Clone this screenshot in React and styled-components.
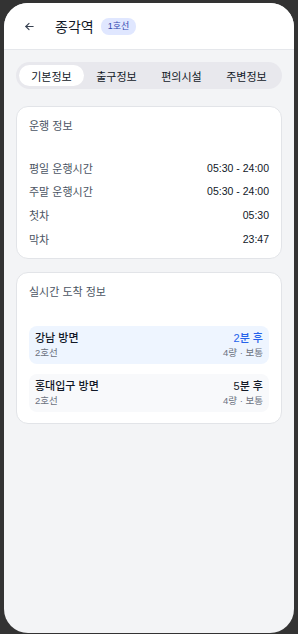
import React from "react";
import styled, { createGlobalStyle } from "styled-components";

const Global = createGlobalStyle`
  html, body { margin: 0; padding: 0; background: #333333; }
  body { font-family: "Liberation Sans", "Noto Sans CJK KR", sans-serif; }
  * { box-sizing: border-box; }
`;

const Phone = styled.div`
  width: 290px;
  height: 630px;
  margin: 3px 0 0 4px;
  border-radius: 24px;
  overflow: hidden;
  background: #f3f4f6;
  display: flex;
  flex-direction: column;
`;

const Header = styled.header`
  height: 47px;
  background: #ffffff;
  border-bottom: 1px solid #e5e7eb;
  display: flex;
  align-items: center;
  padding: 0 0 0 18px;
`;

const BackButton = styled.button`
  border: 0;
  background: none;
  padding: 0;
  width: 14px;
  height: 14px;
  display: flex;
  align-items: center;
  justify-content: center;
  color: #374151;
  margin-right: 19px;
`;

const Title = styled.h1`
  margin: 0;
  font-size: 14px;
  font-weight: 400;
  color: #111827;
`;

const LineBadge = styled.span`
  margin-left: 7px;
  font-size: 9px;
  line-height: 1;
  color: #3348b0;
  background: #e0e7ff;
  border-radius: 8px;
  padding: 4px 7px;
`;

const Content = styled.main`
  padding: 12px 12px;
  display: flex;
  flex-direction: column;
  gap: 13px;
`;

const Tabs = styled.div`
  display: grid;
  grid-template-columns: repeat(4, 1fr);
  background: #e8e8ed;
  border-radius: 14px;
  padding: 3px;
  margin-bottom: 4px;
`;

const Tab = styled.button`
  border: 0;
  font-family: inherit;
  font-size: 11px;
  height: 21px;
  border-radius: 11px;
  color: #111827;
  background: ${(p) => (p.$active ? "#ffffff" : "transparent")};
  padding: 0;
`;

const Card = styled.section`
  background: #ffffff;
  border: 1px solid #e2e4e8;
  border-radius: 12px;
  padding: 11px 12px ${(p) => p.$pb}px;
`;

const CardTitle = styled.h2`
  margin: 0 0 ${(p) => p.$gap}px;
  font-size: 11px;
  font-weight: 400;
  color: #4b5563;
  line-height: 16px;
`;

const InfoList = styled.div`
  display: flex;
  flex-direction: column;
`;

const InfoRow = styled.div`
  display: flex;
  justify-content: space-between;
  align-items: center;
  height: ${(p) => p.$h}px;
  font-size: 11px;
`;

const Label = styled.span`
  color: #4b5563;
`;

const Value = styled.span`
  color: #111827;
  font-size: 10.5px;
`;

const ArrivalList = styled.div`
  display: flex;
  flex-direction: column;
  gap: 10px;
`;

const Arrival = styled.div`
  background: ${(p) => (p.$highlight ? "#eef5ff" : "#f8f9fb")};
  border-radius: 8px;
  padding: 5px 6px;
  display: flex;
  justify-content: space-between;
`;

const Col = styled.div`
  display: flex;
  flex-direction: column;
  align-items: ${(p) => (p.$right ? "flex-end" : "flex-start")};
`;

const Direction = styled.span`
  font-size: 11px;
  line-height: 15px;
  color: #111827;
  font-weight: 500;
`;

const Eta = styled.span`
  font-size: 11px;
  line-height: 15px;
  font-weight: 500;
  color: ${(p) => (p.$soon ? "#2563eb" : "#111827")};
`;

const Sub = styled.span`
  font-size: 9.5px;
  line-height: 13px;
  color: #6b7280;
`;

const rows = [
  ["평일 운행시간", "05:30 - 24:00", 22],
  ["주말 운행시간", "05:30 - 24:00", 24],
  ["첫차", "05:30", 24],
  ["막차", "23:47", 24],
];

const arrivals = [
  { dir: "강남 방면", line: "2호선", eta: "2분 후", info: "4량 · 보통", soon: true },
  { dir: "홍대입구 방면", line: "2호선", eta: "5분 후", info: "4량 · 보통", soon: false },
];

export default function App() {
  return (
    <>
      <Global />
      <Phone>
        <Header>
          <BackButton aria-label="뒤로">
            <svg width="11" height="11" viewBox="0 0 24 24" fill="none" stroke="currentColor" strokeWidth="2.4" strokeLinecap="round" strokeLinejoin="round">
              <path d="M20 12H4" />
              <path d="M11 5l-7 7 7 7" />
            </svg>
          </BackButton>
          <Title>종각역</Title>
          <LineBadge>1호선</LineBadge>
        </Header>
        <Content>
          <Tabs>
            <Tab $active>기본정보</Tab>
            <Tab>출구정보</Tab>
            <Tab>편의시설</Tab>
            <Tab>주변정보</Tab>
          </Tabs>
          <Card $pb={7}>
            <CardTitle $gap={23}>운행 정보</CardTitle>
            <InfoList>
              {rows.map(([l, v, h]) => (
                <InfoRow key={l} $h={h}>
                  <Label>{l}</Label>
                  <Value>{v}</Value>
                </InfoRow>
              ))}
            </InfoList>
          </Card>
          <Card $pb={11}>
            <CardTitle $gap={26}>실시간 도착 정보</CardTitle>
            <ArrivalList>
              {arrivals.map((a) => (
                <Arrival key={a.dir} $highlight={a.soon}>
                  <Col>
                    <Direction>{a.dir}</Direction>
                    <Sub>{a.line}</Sub>
                  </Col>
                  <Col $right>
                    <Eta $soon={a.soon}>{a.eta}</Eta>
                    <Sub>{a.info}</Sub>
                  </Col>
                </Arrival>
              ))}
            </ArrivalList>
          </Card>
        </Content>
      </Phone>
    </>
  );
}
